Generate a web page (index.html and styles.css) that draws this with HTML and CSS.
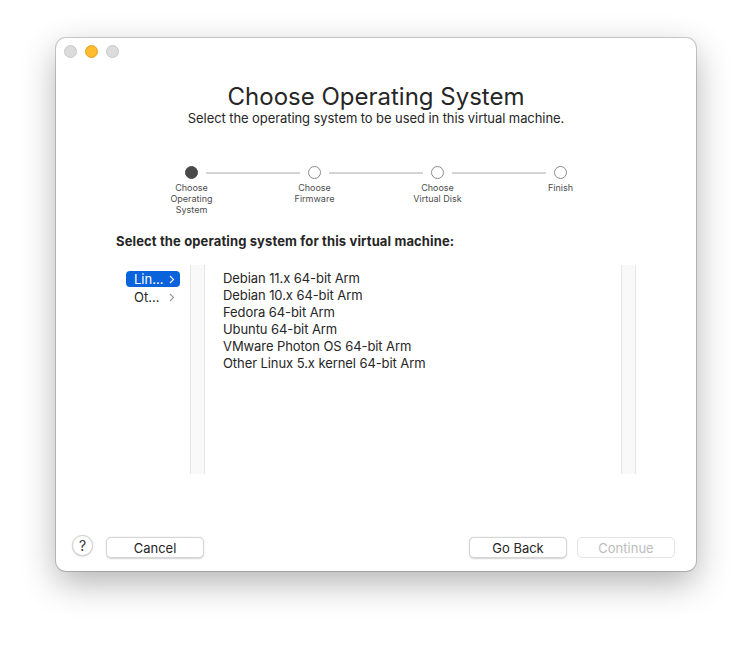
FILE: index.html
```html
<!DOCTYPE html>
<html lang="en">

<head>
    <meta charset="UTF-8">
    <meta name="viewport" content="width=device-width, initial-scale=1.0">
    <title>Choose Operating System</title>
    <link rel="stylesheet" href="styles.css">
</head>

<body>
    <div class="window">
        <!-- traffic lights -->
        <div class="titlebar">
            <span class="light"></span>
            <span class="light light-min"></span>
            <span class="light"></span>
        </div>

        <h1 class="title">Choose Operating System</h1>
        <p class="subtitle">Select the operating system to be used in this virtual machine.</p>

        <!-- wizard steps -->
        <div class="stepper">
            <div class="track">
                <span class="dot dot-done"></span>
                <span class="line"></span>
                <span class="dot"></span>
                <span class="line"></span>
                <span class="dot"></span>
                <span class="line"></span>
                <span class="dot"></span>
            </div>
            <div class="labels">
                <span>Choose<br>Operating<br>System</span>
                <span>Choose<br>Firmware</span>
                <span>Choose<br>Virtual Disk</span>
                <span>Finish</span>
            </div>
        </div>

        <div class="content">
            <h2 class="heading">Select the operating system for this virtual machine:</h2>

            <div class="picker">
                <ul class="source">
                    <li class="source-item selected">Lin... <svg class="chev" width="6" height="9" viewBox="0 0 6 9"><path d="M1 1l3.5 3.5L1 8" fill="none" stroke="currentColor" stroke-width="1.1"/></svg></li>
                    <li class="source-item">Ot... <svg class="chev" width="6" height="9" viewBox="0 0 6 9"><path d="M1 1l3.5 3.5L1 8" fill="none" stroke="currentColor" stroke-width="1.1"/></svg></li>
                </ul>

                <div class="panel">
                    <div class="gutter"></div>
                    <ul class="os-list">
                        <li>Debian 11.x 64-bit Arm</li>
                        <li>Debian 10.x 64-bit Arm</li>
                        <li>Fedora 64-bit Arm</li>
                        <li>Ubuntu 64-bit Arm</li>
                        <li>VMware Photon OS 64-bit Arm</li>
                        <li>Other Linux 5.x kernel 64-bit Arm</li>
                    </ul>
                    <div class="gutter"></div>
                </div>
            </div>
        </div>

        <div class="footer">
            <button class="help">?</button>
            <button class="btn cancel">Cancel</button>
            <div class="spacer"></div>
            <button class="btn">Go Back</button>
            <button class="btn" disabled>Continue</button>
        </div>
    </div>
</body>

</html>
```

FILE: styles.css
```css
html,
body {
    height: 100%;
}

body {
    margin: 0;
    padding-top: 38px;
    box-sizing: border-box;
    background: #fff;
    font-family: Inter, "Liberation Sans", sans-serif;
    color: #262626;
}

.window {
    box-sizing: border-box;
    width: 640px;
    height: 533px;
    margin-left: 56px;
    background: #fff;
    border-radius: 10px;
    box-shadow: 0 0 0 1px rgba(0, 0, 0, 0.18), 0 12px 34px rgba(0, 0, 0, 0.3);
    display: flex;
    flex-direction: column;
}

.titlebar {
    display: flex;
    gap: 8px;
    padding: 7px 0 0 8px;
    height: 12px;
}

.light {
    width: 11px;
    height: 11px;
    border-radius: 50%;
    background: #dcdcdc;
    border: 0.5px solid #c8c8c8;
}

.light-min {
    background: #febc2e;
    border-color: #e1a121;
}

.title {
    margin: 27px 0 0;
    font-size: 24px;
    line-height: 26px;
    font-weight: 400;
    text-align: center;
}

.subtitle {
    margin: 0;
    font-size: 13px;
    line-height: 17px;
    letter-spacing: -0.08px;
    text-align: center;
}

.stepper {
    width: 492px;
    margin: 39px 0 0 74px;
}

.track {
    display: flex;
    align-items: center;
    padding: 0 55px;
}

.dot {
    box-sizing: border-box;
    width: 13px;
    height: 13px;
    border-radius: 50%;
    border: 1px solid #8a8a8a;
    background: #fff;
}

.dot-done {
    background: #4a4a4a;
    border-color: #4a4a4a;
}

.line {
    flex: 1;
    height: 2px;
    margin: 0 8px;
    background: #d4d4d4;
}

.labels {
    display: grid;
    grid-template-columns: repeat(4, 1fr);
    margin-top: 3px;
    font-size: 9px;
    line-height: 11px;
    color: #4d4d4d;
    text-align: center;
}

.content {
    padding: 0 60px;
}

.heading {
    margin: 18px 0 0;
    font-size: 13px;
    line-height: 16px;
    font-weight: 700;
    letter-spacing: 0.13px;
}

.picker {
    display: flex;
    margin-top: 16px;
    height: 209px;
}

.source {
    list-style: none;
    margin: 0;
    padding: 6px 10px 0;
    width: 54px;
    display: flex;
    flex-direction: column;
    gap: 2px;
}

.source-item {
    display: flex;
    align-items: center;
    justify-content: space-between;
    height: 16px;
    padding: 0 5px 0 8px;
    border-radius: 4px;
    font-size: 13px;
    color: #262626;
}

.source-item .chev {
    color: #9a9a9a;
}

.source-item.selected {
    background: #0a63db;
    color: #fff;
}

.source-item.selected .chev {
    color: #fff;
}

.panel {
    flex: 1;
    display: flex;
}

.gutter {
    width: 13px;
    background: #f9f9f9;
    border-left: 1px solid #e6e6e6;
    border-right: 1px solid #e6e6e6;
}

.os-list {
    flex: 1;
    list-style: none;
    margin: 0;
    padding: 5px 0 0 18px;
    font-size: 13px;
    line-height: 17px;
    letter-spacing: -0.08px;
}

.footer {
    margin-top: auto;
    display: flex;
    align-items: center;
    padding: 0 21px 11px 16px;
}

.spacer {
    flex: 1;
}

.help {
    width: 21px;
    height: 21px;
    padding: 0;
    border-radius: 50%;
    border: 0.5px solid #d0d0d0;
    background: #fff;
    box-shadow: 0 0.5px 1.5px rgba(0, 0, 0, 0.2);
    font-family: inherit;
    font-size: 14px;
    color: #333;
    margin-bottom: 4px;
}

.btn {
    width: 98px;
    height: 21px;
    padding: 0;
    border-radius: 5px;
    border: 0.5px solid #d6d6d6;
    background: #fff;
    box-shadow: 0 0.5px 1.5px rgba(0, 0, 0, 0.18);
    font-family: inherit;
    font-size: 13px;
    color: #262626;
}

.btn + .btn {
    margin-left: 10px;
}

.cancel {
    margin-left: 13px;
}

.btn:disabled {
    color: #bdbdbd;
    box-shadow: none;
    border-color: #e4e4e4;
}
```
